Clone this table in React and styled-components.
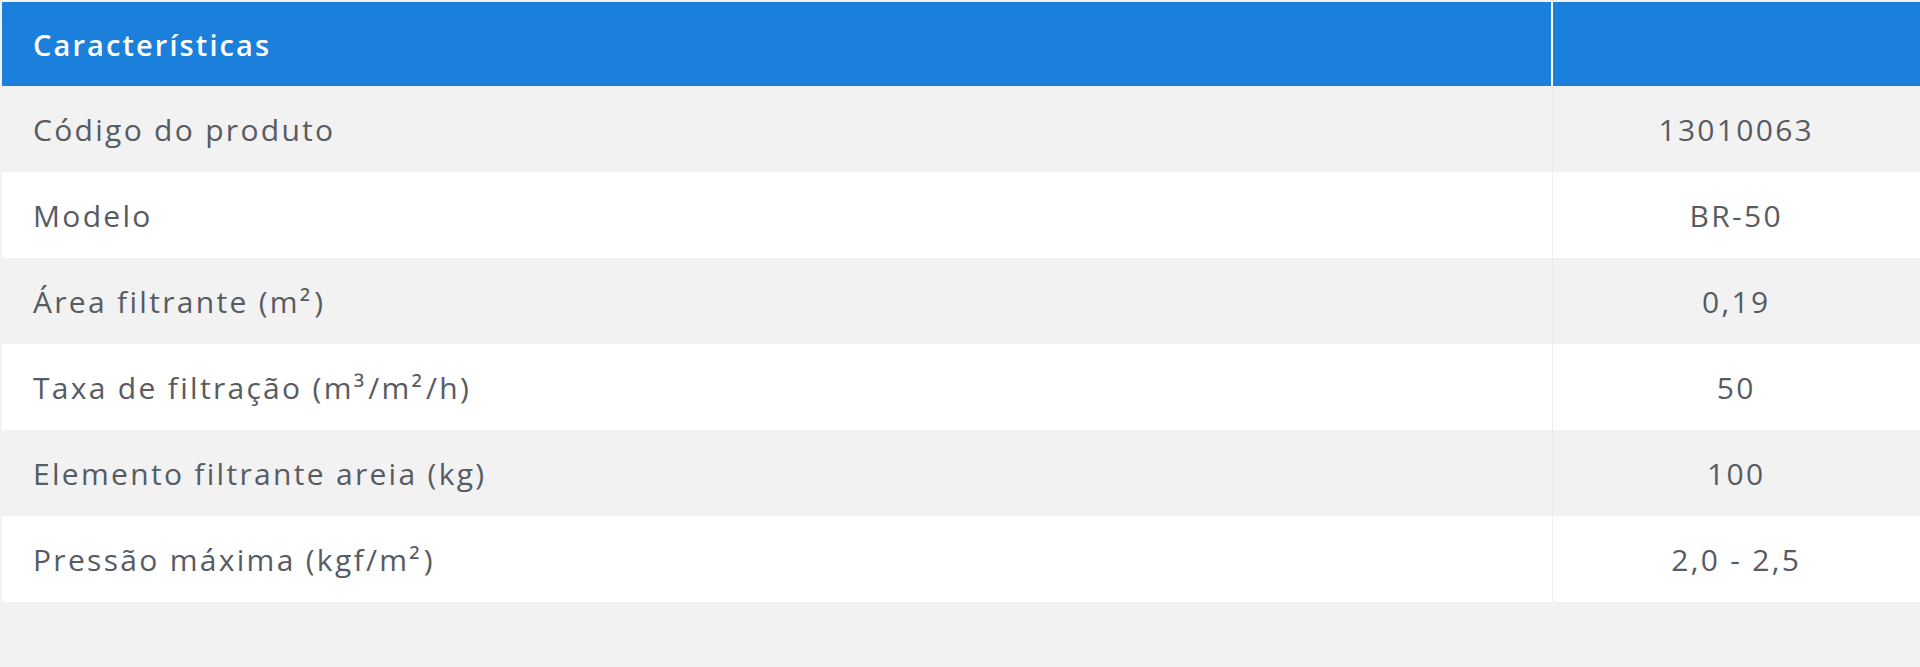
import React from "react";
import styled, { createGlobalStyle } from "styled-components";

const Global = createGlobalStyle`
  html, body { margin: 0; padding: 0; background: #f2f2f2; }
  body { font-family: "Open Sans", "DejaVu Sans", sans-serif; }
`;

const Page = styled.div`
  padding: 2px 0 0 2px;
`;

const Table = styled.table`
  width: 100%;
  border-collapse: collapse;
  table-layout: fixed;
`;

const HeadCell = styled.th`
  background: #1b80dc;
  color: #ffffff;
  font-weight: 600;
  font-size: 29px;
  letter-spacing: 2.1px;
  text-align: left;
  height: 84px;
  padding: 0 0 0 31px;
  box-sizing: border-box;
  border-left: ${(p) => (p.$divider ? "2px solid #ffffff" : "none")};
  width: ${(p) => p.$width || "auto"};
`;

const Row = styled.tr`
  background: ${(p) => (p.$alt ? "#ffffff" : "#f2f2f2")};
`;

const Cell = styled.td`
  height: 86px;
  padding: 0 0 0 ${(p) => (p.$center ? "0" : "31px")};
  box-sizing: border-box;
  font-size: 30px;
  letter-spacing: 2.3px;
  color: #575b62;
  text-align: ${(p) => (p.$center ? "center" : "left")};
  border-left: ${(p) => (p.$divider ? "1px solid #ececec" : "none")};
`;

const Sup = styled.span`
  letter-spacing: 4px;
`;

const rows = [
  ["Código do produto", "13010063"],
  ["Modelo", "BR-50"],
  [<>Área filtrante (m<Sup>²</Sup>)</>, "0,19"],
  [<>Taxa de filtração (m<Sup>³</Sup>/m<Sup>²</Sup>/h)</>, "50"],
  ["Elemento filtrante areia (kg)", "100"],
  [<>Pressão máxima (kgf/m<Sup>²</Sup>)</>, "2,0 - 2,5"],
];

export default function App() {
  return (
    <Page>
      <Global />
      <Table>
        <thead>
          <tr>
            <HeadCell $width="1550px">Características</HeadCell>
            <HeadCell $divider />
          </tr>
        </thead>
        <tbody>
          {rows.map(([label, value], i) => (
            <Row key={i} $alt={i % 2 === 1}>
              <Cell>{label}</Cell>
              <Cell $center $divider>{value}</Cell>
            </Row>
          ))}
        </tbody>
      </Table>
    </Page>
  );
}
